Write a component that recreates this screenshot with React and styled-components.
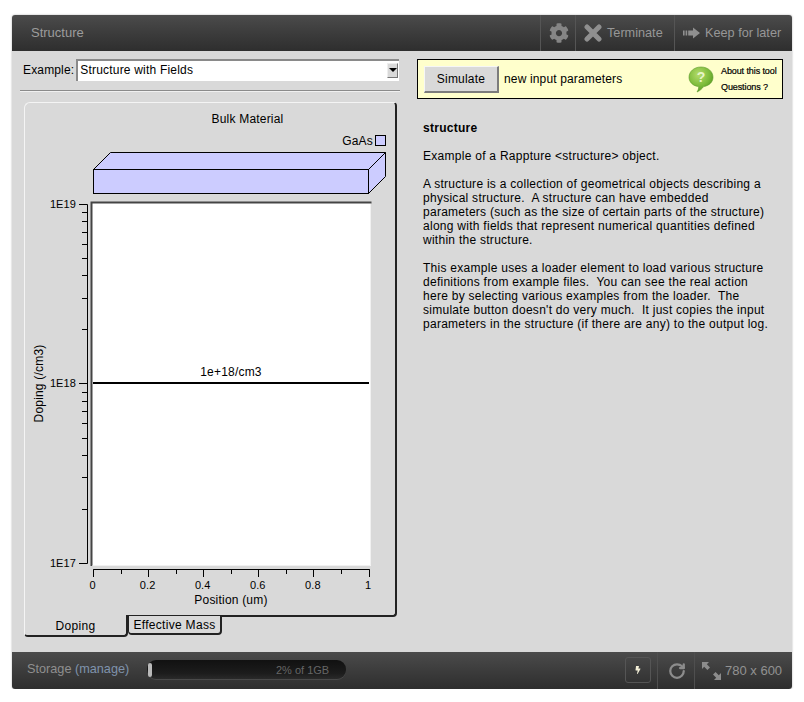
import styled, { createGlobalStyle } from "styled-components";
import { FaCog, FaBolt } from "react-icons/fa";
import { RotateCw } from "lucide-react";

const GlobalStyle = createGlobalStyle`
  html, body { margin: 0; padding: 0; background: #fff; }
  body { font-family: "Liberation Sans", Arial, sans-serif; }
`;

const barBg = "linear-gradient(to bottom, #4b4b4b 0%, #3c3c3c 50%, #2e2e2e 100%)";

const Frame = styled.div`
  width: 780px;
  margin: 15px 12px 0;
  border-radius: 3px;
  box-shadow: 0 0 2px rgba(0, 0, 0, 0.35);
  overflow: hidden;
`;

const Header = styled.header`
  height: 36px;
  display: flex;
  align-items: stretch;
  background: ${barBg};
  color: #999;
  font-size: 12.7px;
`;

const Title = styled.div`
  flex: 1;
  padding-left: 19px;
  line-height: 35px;
  font-size: 13px;
  color: #9c9c9c;
`;

const HeadItem = styled.div`
  display: flex;
  align-items: center;
  gap: ${(p) => p.$gap || 6}px;
  width: ${(p) => p.$w}px;
  box-sizing: border-box;
  padding-left: ${(p) => p.$pad}px;
  border-left: 1px solid #555;
  color: #979797;
  white-space: nowrap;
`;

const Content = styled.main`
  height: 601px;
  background: #d9d9d9;
  display: flex;
`;

const LeftCol = styled.section`
  width: 400px;
  box-sizing: border-box;
  padding: 8px 0 0 8px;
`;

const ExampleRow = styled.div`
  display: flex;
  align-items: center;
  height: 22px;
  margin-left: 3px;
  font-size: 12px;
  letter-spacing: 0.15px;
  color: #000;
`;

const FakeSelect = styled.div`
  margin-left: 2px;
  width: 323px;
  height: 22px;
  box-sizing: border-box;
  background: #fff;
  border-top: 2px solid #8a8a8a;
  border-left: 2px solid #8a8a8a;
  display: flex;
  align-items: center;
  justify-content: space-between;
  padding: 0 1px 2px 2px;
  letter-spacing: 0.2px;
`;

const SelectButton = styled.div`
  width: 11px;
  height: 15px;
  box-sizing: border-box;
  background: #d9d9d9;
  border-right: 1px solid #777;
  border-bottom: 1px solid #777;
  border-top: 1px solid #eee;
  border-left: 1px solid #eee;
  display: flex;
  align-items: center;
  justify-content: center;
  &::after {
    content: "";
    border-left: 4px solid transparent;
    border-right: 4px solid transparent;
    border-top: 4px solid #000;
  }
`;

const Rule = styled.div`
  width: 380px;
  height: 2px;
  margin: 9px 0 10px;
  background: #8b8b8b;
  border-bottom: 1px solid #f0f0f0;
  box-sizing: border-box;
`;

const Panel = styled.div`
  width: 373px;
  height: 515px;
  margin-left: 4px;
  box-sizing: border-box;
  border-top: 1px solid #f4f4f4;
  border-left: 1px solid #f4f4f4;
  border-right: 2px solid #222;
  border-bottom: 2px solid #222;
  border-radius: 6px 4px 4px 0;
`;

const ChartSvg = styled.svg`
  display: block;
`;

const Tabs = styled.div`
  display: flex;
  align-items: flex-start;
  margin-left: 4px;
  margin-top: -2px;
  font-size: 12px;
  letter-spacing: 0.3px;
  position: relative;
`;

const Tab = styled.div`
  box-sizing: border-box;
  width: ${(p) => p.$w}px;
  height: ${(p) => (p.$active ? 22 : 20)}px;
  background: #d9d9d9;
  text-align: center;
  line-height: 18px;
  color: #000;
  border-bottom: 2px solid #222;
  border-right: 2px solid #222;
  border-left: 1px solid ${(p) => (p.$active ? "#f4f4f4" : "#222")};
  border-top: ${(p) => (p.$active ? "none" : "1px solid #222")};
  border-radius: 0 0 4px 4px;
  padding-top: ${(p) => (p.$active ? 2 : 0)}px;
`;

const RightCol = styled.section`
  width: 380px;
  box-sizing: border-box;
  padding: 8px 9px 0 5px;
`;

const SimBar = styled.div`
  height: 40px;
  box-sizing: border-box;
  background: #ffffcc;
  border: 1px solid #000;
  display: flex;
  align-items: center;
  padding-left: 6px;
  font-size: 12px;
  letter-spacing: 0.15px;
`;

const SimButton = styled.button`
  width: 75px;
  height: 27px;
  margin: 0 5px 0 0;
  padding: 0;
  background: #d9d9d9;
  font: inherit;
  letter-spacing: 0.2px;
  color: #000;
  border-style: solid;
  border-width: 1px 2px 2px 1px;
  border-color: #f6f6f6 #7c7c7c #7c7c7c #f6f6f6;
`;

const SimText = styled.span`
  flex: 1;
`;

const HelpLinks = styled.div`
  width: 61px;
  margin-left: 7px;
  font-size: 9px;
  line-height: 16px;
  letter-spacing: -0.1px;
  white-space: nowrap;
  color: #000;
  -webkit-text-stroke: 0.2px #000;
`;

const Description = styled.article`
  padding: 22px 0 0 6px;
  font-size: 12px;
  line-height: 14px;
  letter-spacing: 0.27px;
  color: #000;
  white-space: pre;
`;

const DescTitle = styled.div`
  font-weight: bold;
  margin-bottom: 14px;
`;

const Footer = styled.footer`
  height: 37px;
  display: flex;
  align-items: stretch;
  background: ${barBg};
  font-size: 12.7px;
  color: #8c8c8c;
`;

const Storage = styled.div`
  width: 135px;
  padding-left: 15px;
  box-sizing: border-box;
  line-height: 35px;
  white-space: nowrap;
  color: #8f8f8f;
`;

const ManageLink = styled.span`
  color: #7f93ac;
`;

const Meter = styled.div`
  width: 199px;
  height: 19px;
  margin-top: 8px;
  border-radius: 9px;
  background: linear-gradient(to bottom, #111 0%, #1c1c1c 70%, #2a2a2a 100%);
  box-shadow: 0 1px 0 #4a4a4a;
  display: flex;
  align-items: center;
  font-size: 11px;
  color: #666;
`;

const MeterFill = styled.div`
  width: 4px;
  height: 14px;
  margin-left: 1px;
  border-radius: 2px;
  background: #b9b9b9;
`;

const MeterLabel = styled.span`
  margin-left: 124px;
`;

const FootSpacer = styled.div`
  flex: 1;
`;

const BoltButton = styled.div`
  width: 26px;
  height: 26px;
  margin: 5px 6px 0 0;
  box-sizing: border-box;
  border: 1px solid #555;
  border-radius: 3px;
  display: flex;
  align-items: center;
  justify-content: center;
  color: #f4f0d8;
`;

const FootItem = styled.div`
  width: ${(p) => p.$w}px;
  box-sizing: border-box;
  padding-left: ${(p) => p.$pad}px;
  border-left: 1px solid #4f4f4f;
  display: flex;
  align-items: center;
  gap: 4px;
  white-space: nowrap;
  font-size: 13px;
  color: #929292;
`;

const textProps = { fontFamily: "Liberation Sans, Arial, sans-serif", fontSize: 12, fill: "#000", letterSpacing: 0.2 };
const tickProps = { ...textProps, fontSize: 11, letterSpacing: 0.1 };

const Y_TOP = 102;
const X_LEFT = 25;
const decades = [204, 383.5];
const yMinor = [];
decades.forEach((top) => {
  for (let k = 2; k < 10; k++) {
    yMinor.push(top + 179.5 * (1 - Math.log10(k)));
  }
});
const xMajor = [0, 0.2, 0.4, 0.6, 0.8, 1];
const xAt = (v) => 93 + v * 275.5;

// chart is drawn in page coordinates, shifted by the panel origin
function StructureChart() {
  return (
    <ChartSvg width="370" height="512" viewBox={`${X_LEFT} ${Y_TOP + 1} 370 512`}>
      <text {...textProps} x="247.5" y="123" textAnchor="middle">Bulk Material</text>
      <text {...textProps} x="373" y="145" textAnchor="end">GaAs</text>
      <rect x="375.5" y="135.5" width="10" height="10" fill="#ccccff" stroke="#000" />

      <g fill="#ccccff" stroke="#000" strokeWidth="1">
        <polygon points="93.5,169.5 110.5,152.5 385.5,152.5 368.5,169.5" />
        <polygon points="368.5,169.5 385.5,152.5 385.5,176.5 368.5,193.5" />
        <rect x="93.5" y="169.5" width="275" height="24" />
      </g>

      <rect x="92" y="203" width="279" height="363" fill="#fff" />
      <path d="M91.5 566V202.5H371.5" fill="none" stroke="#444" strokeWidth="2" />
      <path d="M92.5 565.5H370.5V204" fill="none" stroke="#f1f1f1" strokeWidth="1" />

      <g stroke="#000" strokeWidth="1" fill="none">
        <path d="M79 204.5H87.5V563.5H79" />
        <path d="M79 383.5H87.5" />
        {yMinor.map((y) => (
          <path key={y} d={`M82 ${Math.round(y) + 0.5}H87.5`} />
        ))}
        <path d="M93.5 577V569.5H369.5V577" />
        {Array.from({ length: 11 }, (_, i) => (
          <path key={i} d={`M${Math.round(xAt(i / 10)) + 0.5} 569.5V${i % 2 ? 574 : 577}`} />
        ))}
      </g>

      <text {...tickProps} x="76" y="208" textAnchor="end">1E19</text>
      <text {...tickProps} x="76" y="387" textAnchor="end">1E18</text>
      <text {...tickProps} x="76" y="567" textAnchor="end">1E17</text>
      {xMajor.map((v) => (
        <text key={v} {...tickProps} x={xAt(v) - 0.5} y="589" textAnchor="middle">{v}</text>
      ))}
      <text {...textProps} x="231" y="604" textAnchor="middle">Position (um)</text>
      <text {...textProps} transform="translate(43 383.5) rotate(-90)" textAnchor="middle">Doping (/cm3)</text>

      <path d="M93 383H369" stroke="#000" strokeWidth="2" />
      <text {...textProps} x="231" y="376" textAnchor="middle">1e+18/cm3</text>
    </ChartSvg>
  );
}

function CloseIcon() {
  return (
    <svg width="18" height="18" viewBox="0 0 18 18">
      <path d="M3 3L15 15M15 3L3 15" stroke="#8f8f8f" strokeWidth="5" strokeLinecap="round" />
    </svg>
  );
}

function ArrowIcon() {
  return (
    <svg width="17" height="12" viewBox="0 0 17 12">
      <path d="M0 3.5h1.6v5H0zM2.6 3.5h1.6v5H2.6zM5.2 3.5H10V0.5L17 6l-7 5.5v-3H5.2z" fill="#8f8f8f" />
    </svg>
  );
}

function ResizeIcon() {
  return (
    <svg width="19" height="18" viewBox="0 0 19 18">
      <path d="M0 0h7L4.8 2.2 8 5.4 5.4 8 2.2 4.8 0 7zM19 18h-7l2.2-2.2-3.2-3.2 2.6-2.6 3.2 3.2L19 11z" fill="#8c8c8c" />
    </svg>
  );
}

function HelpIcon() {
  return (
    <svg width="26" height="27" viewBox="0 0 26 27">
      <defs>
        <radialGradient id="helpGreen" cx="40%" cy="30%" r="75%">
          <stop offset="0%" stopColor="#b5dc6c" />
          <stop offset="60%" stopColor="#7dbb3a" />
          <stop offset="100%" stopColor="#4f9420" />
        </radialGradient>
      </defs>
      <path
        d="M13 1C19.8 1 25 5.4 25 11.2c0 5-4 8.6-9.4 9.4-1.4 2-3.6 4.2-6.6 5.4 1.2-1.8 1.7-3.4 1.7-5.4C5 20 1 16.2 1 11.2 1 5.4 6.2 1 13 1z"
        fill="url(#helpGreen)"
        stroke="#5d9a2c"
        strokeWidth="0.6"
      />
      <text x="13" y="16" textAnchor="middle" fontFamily="Liberation Sans, Arial, sans-serif" fontWeight="bold" fontSize="14" fill="#e6f5c8">?</text>
    </svg>
  );
}

const descriptionText = `Example of a Rappture <structure> object.

A structure is a collection of geometrical objects describing a
physical structure.  A structure can have embedded
parameters (such as the size of certain parts of the structure)
along with fields that represent numerical quantities defined
within the structure.

This example uses a loader element to load various structure
definitions from example files.  You can see the real action
here by selecting various examples from the loader.  The
simulate button doesn't do very much.  It just copies the input
parameters in the structure (if there are any) to the output log.`;

export default function App() {
  return (
    <>
      <GlobalStyle />
      <Frame>
        <Header>
          <Title>Structure</Title>
          <HeadItem $w={35} $pad={8}>
            <FaCog size={20} color="#858585" />
          </HeadItem>
          <HeadItem $w={99} $pad={8} $gap={5}>
            <CloseIcon />
            Terminate
          </HeadItem>
          <HeadItem $w={118} $pad={8} $gap={5}>
            <ArrowIcon />
            Keep for later
          </HeadItem>
        </Header>

        <Content>
          <LeftCol>
            <ExampleRow>
              Example:
              <FakeSelect>
                Structure with Fields
                <SelectButton />
              </FakeSelect>
            </ExampleRow>
            <Rule />
            <Panel>
              <StructureChart />
            </Panel>
            <Tabs>
              <Tab $w={104} $active>Doping</Tab>
              <Tab $w={94}>Effective Mass</Tab>
            </Tabs>
          </LeftCol>

          <RightCol>
            <SimBar>
              <SimButton>Simulate</SimButton>
              <SimText>new input parameters</SimText>
              <HelpIcon />
              <HelpLinks>
                <div>About this tool</div>
                <div>Questions ?</div>
              </HelpLinks>
            </SimBar>
            <Description>
              <DescTitle>structure</DescTitle>
              {descriptionText}
            </Description>
          </RightCol>
        </Content>

        <Footer>
          <Storage>
            Storage <ManageLink>(manage)</ManageLink>
          </Storage>
          <Meter>
            <MeterFill />
            <MeterLabel>2% of 1GB</MeterLabel>
          </Meter>
          <FootSpacer />
          <BoltButton>
            <FaBolt size={8} />
          </BoltButton>
          <FootItem $w={37} $pad={10}>
            <RotateCw size={18} strokeWidth={3} color="#8c8c8c" />
          </FootItem>
          <FootItem $w={98} $pad={7}>
            <ResizeIcon />
            780 x 600
          </FootItem>
        </Footer>
      </Frame>
    </>
  );
}
